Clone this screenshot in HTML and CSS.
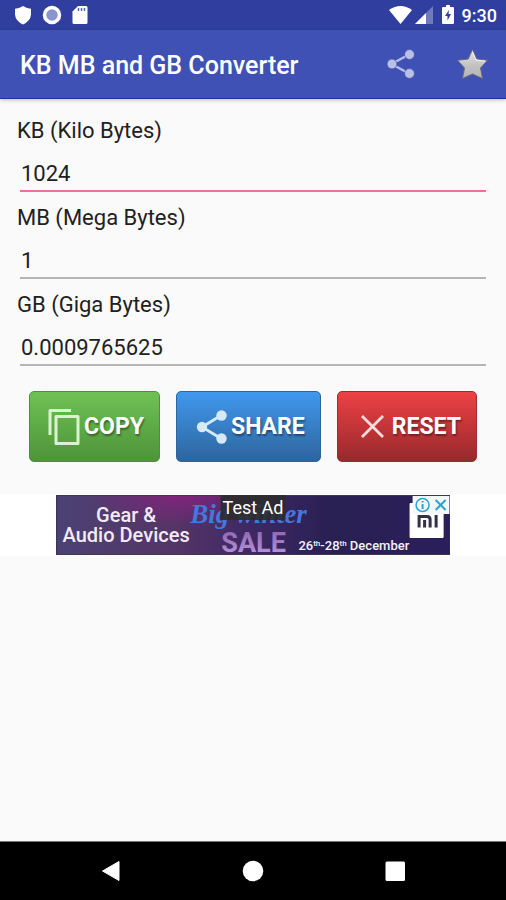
FILE: index.html
```html
<!DOCTYPE html>
<html lang="en">
<head>
<meta charset="utf-8">
<meta name="viewport" content="width=device-width, initial-scale=1">
<title>KB MB and GB Converter</title>
<link rel="stylesheet" href="styles.css">
</head>
<body>
<div class="status">
  <div class="status-left">
    <svg width="18" height="20" viewBox="0 0 18 20"><path d="M9 1 Q13 3.5 17 3.800V9.500Q16.500 16 9 19.500Q1.500 16 1 9.500V3.800Q5 3.500 9 1Z" fill="#fff"/></svg>
    <svg width="20" height="20" viewBox="0 0 20 20"><circle cx="10" cy="10" r="7.500" fill="#8c95cb" stroke="#fff" stroke-width="3.500"/></svg>
    <svg width="16" height="20" viewBox="0 0 16 20"><path d="M6 1H14Q15.500 1 15.500 2.500V17.500Q15.500 19 14 19H2Q.5 19 .5 17.500V6.500Z" fill="#fff"/><path d="M6.500 3v3M9.500 3v3M12.500 3v3" stroke="#5a66b4" stroke-width="1.500"/></svg>
  </div>
  <div class="status-right">
    <svg width="23" height="20" viewBox="0 0 23 20"><path d="M0 5Q11.500-3 23 5L11.500 19Z" fill="#fff"/></svg>
    <svg width="20" height="20" viewBox="0 0 20 20"><path d="M19 1V19H1Z" fill="#7079bd"/><path d="M12 8V19H1Z" fill="#fff"/></svg>
    <svg class="battery" width="12" height="20" viewBox="0 0 12 20"><path d="M4 0H8V2H11Q12 2 12 3V18Q12 19 11 19H1Q0 19 0 18V3Q0 2 1 2H4Z" fill="#fff"/><path d="M7 5L3 11H5.500V15.500L9 9H6.500Z" fill="#303f9f"/></svg>
    <span>9:30</span>
  </div>
</div>
<header class="appbar">
  <h1>KB MB and GB Converter</h1>
  <button class="tool" type="button" aria-label="Share">
    <svg width="32" height="32" viewBox="0 0 32 32"><g fill="#b9c0e6" stroke="#35439a" stroke-width=".6"><path d="M7.500 15L25 5.500M7.500 15L25 24.500" stroke="#b9c0e6" stroke-width="2.400"/><circle cx="8" cy="15" r="4.900"/><circle cx="25.500" cy="5.500" r="4.900"/><circle cx="25.500" cy="24.500" r="4.900"/></g></svg>
  </button>
  <button class="tool" type="button" aria-label="Rate">
    <svg width="32" height="32" viewBox="0 0 32 32"><defs><linearGradient id="star" x2="0" y2="1"><stop stop-color="#e6e6e6"/><stop offset=".55" stop-color="#c2c2c2"/><stop offset="1" stop-color="#b4b4b4"/></linearGradient></defs><path d="M16.500 .5L20.800 10L31.500 11.300L24.500 19L26.500 29.500L16.500 25L6.500 29.500L8.500 19L1.500 11.300L12.200 10Z" fill="url(#star)" stroke="#666a80" stroke-width="1" stroke-linejoin="round"/><path d="M16.500 3L20 11L29 12.200" fill="none" stroke="#f2f2f2" stroke-width="1"/></svg>
  </button>
</header>
<main>
  <form class="converter">
    <div class="field"><label for="kb">KB (Kilo Bytes)</label><input class="active" id="kb" type="text" inputmode="decimal" value="1024"></div>
    <div class="field"><label for="mb">MB (Mega Bytes)</label><input id="mb" type="text" inputmode="decimal" value="1"></div>
    <div class="field"><label for="gb">GB (Giga Bytes)</label><input id="gb" type="text" inputmode="decimal" value="0.0009765625"></div>
    <div class="actions">
      <button class="action copy" type="button">
        <svg width="36" height="36" viewBox="0 0 36 36"><g fill="none" stroke="#d9f3cf" stroke-width="3" stroke-linejoin="round"><path d="M5 26V1.500H26"/><rect x="11" y="7.500" width="22" height="27"/></g></svg>Copy
      </button>
      <button class="action share" type="button">
        <svg width="36" height="36" viewBox="0 0 36 36"><g fill="#d5e9fb"><path d="M10 18L29 6.500M10 18L29 29.500" stroke="#d5e9fb" stroke-width="2.800"/><circle cx="10" cy="18" r="5.200"/><circle cx="29.500" cy="6.500" r="5.200"/><circle cx="29.500" cy="29.500" r="5.200"/></g></svg>Share
      </button>
      <button class="action reset" type="button">
        <svg width="36" height="36" viewBox="0 0 36 36"><path d="M9 7L30 28M30 7L9 28" stroke="#fbdcdc" stroke-width="2.800"/></svg>Reset
      </button>
    </div>
  </form>
  <aside class="ad-strip">
    <div class="ad">
      <svg class="art" viewBox="0 0 394 60" role="img" aria-label="Gear and Audio Devices sale">
        <defs>
          <linearGradient id="night"><stop stop-color="#4b4274"/><stop offset=".3" stop-color="#543565"/><stop offset=".5" stop-color="#3d2864"/><stop offset=".7" stop-color="#292052"/><stop offset="1" stop-color="#2b1f5b"/></linearGradient>
          <radialGradient id="glow"><stop stop-color="#8d1f83" stop-opacity=".8"/><stop offset="1" stop-color="#8d1f83" stop-opacity="0"/></radialGradient>
          <linearGradient id="sale" x2="0" y2="1"><stop stop-color="#8a60ad"/><stop offset="1" stop-color="#c09be0"/></linearGradient>
        </defs>
        <rect width="394" height="60" fill="url(#night)"/>
        <ellipse cx="125" cy="0" rx="95" ry="32" fill="url(#glow)"/>
        <g class="offer"><text x="70" y="27" text-anchor="middle">Gear &amp;</text><text x="70" y="47" text-anchor="middle">Audio Devices</text></g>
        <text class="script" x="134" y="28">Big winter</text>
        <text class="sale" x="165" y="57">SALE</text>
        <text class="dates" x="242" y="55">26<tspan class="sup" dy="-4">th</tspan><tspan dy="4">-28</tspan><tspan class="sup" dy="-4">th</tspan><tspan dy="4"> December</tspan></text>
        <rect x="353" y="8" width="34" height="35" rx="1" fill="#fff"/>
        <rect x="356" y="1" width="37" height="18" fill="#f4f8fb"/>
        <path d="M362.500 32.500V21.500H370.500Q373.500 21.500 373.500 24.500V32.500M368 25V32.500M379.500 20V32.500" fill="none" stroke="#343047" stroke-width="3"/>
        <g fill="none" stroke="#2ba3cf" stroke-width="1.500"><circle cx="366" cy="10" r="6.500"/><path d="M366 9V14M366 6V7.500M379 5L389 15M389 5L379 15" stroke-width="2"/></g>
        <rect x=".5" y=".5" width="393" height="59" fill="none" stroke="#40364f"/>
      </svg>
      <span class="ad-label">Test Ad</span>
    </div>
  </aside>
</main>
<nav class="navbar">
  <button type="button" aria-label="Back"><svg width="22" height="22" viewBox="0 0 22 22"><path d="M2.500 11L19 1.500V20.500Z" fill="#fff" stroke="#fff" stroke-width="1" stroke-linejoin="round"/></svg></button>
  <button type="button" aria-label="Home"><svg width="22" height="22" viewBox="0 0 22 22"><circle cx="11" cy="11" r="10.300" fill="#fff"/></svg></button>
  <button type="button" aria-label="Recent apps"><svg width="22" height="22" viewBox="0 0 22 22"><rect x="1.500" y="1.500" width="19.500" height="19.500" rx="1.500" fill="#fff"/></svg></button>
</nav>
</body>
</html>
```
FILE: styles.css
```css
* { box-sizing: border-box; }
body {
  margin: 0;
  min-height: 100vh;
  display: flex;
  flex-direction: column;
  background: #fafafa;
  color: #212121;
  font-family: Roboto, "Liberation Sans", sans-serif;
}
svg { display: block; flex: none; }
button { border: 0; padding: 0; background: none; font: inherit; color: inherit; cursor: pointer; }

.status {
  height: 30px;
  padding: 0 9px 0 14px;
  display: flex;
  align-items: center;
  justify-content: space-between;
  background: #303f9f;
  color: #fff;
  font-size: 18px;
  font-weight: 500;
}
.status-left { display: flex; gap: 10px; }
.status-right { display: flex; align-items: center; gap: 2px; }
.battery { margin: 0 6px; }

.appbar {
  height: 69px;
  padding: 2px 18px 0 20px;
  display: flex;
  align-items: center;
  gap: 40px;
  background: #3f51b5;
  border-bottom: 1px solid #1a32a0;
  box-shadow: 0 1px 4px rgba(0, 0, 0, .25);
  color: #fff;
}
.appbar h1 { flex: 1; margin: 0; font-size: 25px; font-weight: 500; white-space: nowrap; }

main { flex: 1; }
.converter { padding: 20px 20px 32px; }
.field { display: flex; flex-direction: column; gap: 13px; margin-bottom: 14px; }
.field label { margin-left: -3px; font-size: 22px; line-height: 24px; }
.field input {
  width: 100%;
  height: 36px;
  margin: 0;
  padding: 1px 1px 0;
  border: 0;
  border-bottom: 2px solid #b5b5b5;
  border-radius: 0;
  outline: 0;
  background: transparent;
  color: inherit;
  font: inherit;
  font-size: 22px;
}
.field .active { border-color: #f0709c; }

.actions { display: flex; justify-content: center; gap: 16px; padding-top: 11px; }
.action {
  height: 71px;
  padding: 0 15px;
  display: flex;
  align-items: center;
  gap: 3px;
  border-radius: 5px;
  color: #fff;
  font-size: 23px;
  font-weight: 700;
  text-transform: uppercase;
  text-shadow: 1px 2px 2px rgba(0, 0, 0, .4);
}
.copy { background: linear-gradient(#6ec254, #4f933a); border: 1px solid #4a9137; }
.share { background: linear-gradient(#4098ee, #2e659d); border: 1px solid #2d659d; }
.reset { background: linear-gradient(#ee4144, #97292c); border: 1px solid #9b2d30; }

.ad-strip { padding: 1px 0; display: flex; justify-content: center; background: #fff; }
.ad { position: relative; width: 78%; }
.art { width: 100%; }
.offer { fill: #f3eaf6; font-size: 20px; font-weight: 500; }
.script { fill: #4478dc; font: italic 700 27px "Liberation Serif", serif; }
.sale { fill: url(#sale); font: 700 27px Roboto, sans-serif; }
.dates { fill: #f4f0fa; font-size: 13px; font-weight: 500; }
.sup { font-size: 8px; }
.ad-label {
  position: absolute;
  top: 0;
  left: 50%;
  transform: translateX(-50%);
  padding: 0 2px;
  background: rgba(44, 44, 44, .9);
  color: #fff;
  font-size: 18px;
  line-height: 25px;
  white-space: nowrap;
}

.navbar {
  height: 59px;
  padding: 0 40px;
  display: flex;
  align-items: center;
  background: #000;
  border-top: 1px solid #777;
}
.navbar button { flex: 1; display: flex; justify-content: center; }
```
